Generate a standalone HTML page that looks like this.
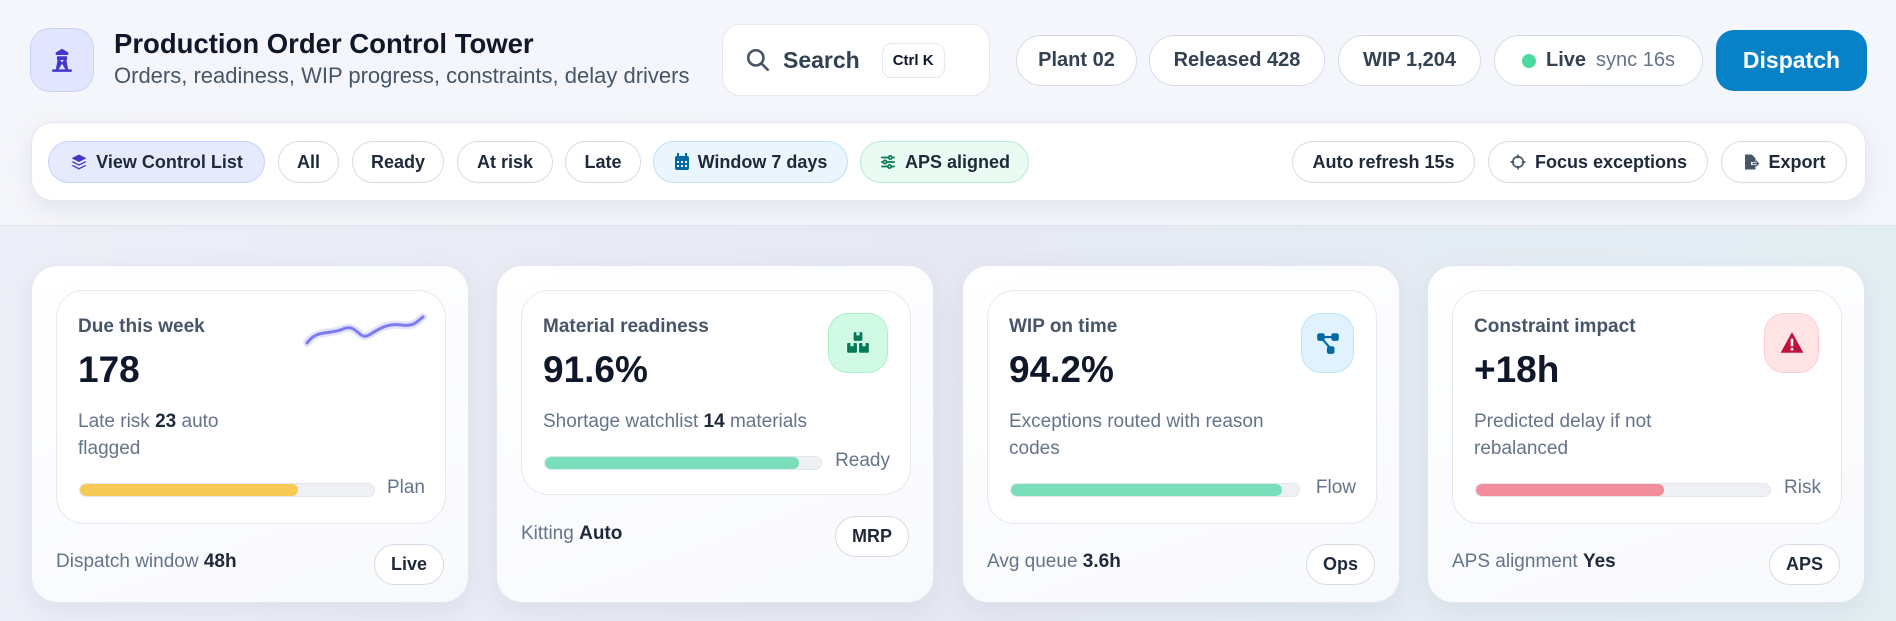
<!DOCTYPE html>
<html><head><meta charset="utf-8"><style>
*{box-sizing:border-box;margin:0;padding:0}
body{width:1896px;height:621px;overflow:hidden;font-family:"Liberation Sans",Arial,sans-serif;background:linear-gradient(90deg,#eceff7,#e6e9f3 50%,#e3eef3);color:#0f172a;position:relative}
.hdr{position:absolute;left:0;top:0;width:1896px;height:226px;background:linear-gradient(90deg,#f5f6fb,#f3f6fb);border-bottom:1px solid #e2e6ef}
.abs{position:absolute}
.logo{left:30px;top:28px;width:64px;height:64px;border-radius:20px;background:#e1e6fe;border:1px solid #c9d2fb;display:flex;align-items:center;justify-content:center}
.title{left:114px;top:28px;font-size:27.5px;font-weight:700;color:#0f172a}
.sub{left:114px;top:63px;font-size:22px;color:#475569}
.search{left:722px;top:24px;width:268px;height:72px;border:1px solid #e2e8f0;border-radius:18px;background:#fff;display:flex;align-items:center;padding-left:22px;font-size:23px;color:#334155;font-weight:600}
.kbd{margin-left:22px;border:1px solid #e2e8f0;border-radius:10px;padding:8px 10px;font-size:15px;font-weight:700;color:#0f172a}
.pill{top:35px;height:51px;border:1px solid #d6dce6;border-radius:26px;background:#fff;display:flex;align-items:center;justify-content:center;font-size:20px;font-weight:600;color:#334155}
.disp{left:1716px;top:30px;width:151px;height:61px;border-radius:18px;background:#0782c8;color:#fff;font-size:23px;font-weight:700;display:flex;align-items:center;justify-content:center}
.bar{left:31px;top:122px;width:1835px;height:79px;background:#fff;border:1px solid #e5e8f0;border-radius:22px;box-shadow:0 8px 24px rgba(100,110,140,.12)}
.chip{top:141px;height:42px;border:1px solid #d6dce6;border-radius:21px;background:#fff;display:flex;align-items:center;justify-content:center;font-size:18px;font-weight:700;color:#1e293b;gap:8px}
.card{top:265px;width:438px;height:338px;background:linear-gradient(160deg,#fff,#f8f9fc);border:1px solid #e2e6ef;border-radius:26px;box-shadow:0 8px 24px rgba(100,110,140,.1)}
.in{position:absolute;left:24px;top:24px;width:390px;border:1px solid #e4e8f0;border-radius:28px;background:#fff}
.lab{position:absolute;left:21px;top:25px;font-size:19px;font-weight:700;color:#475569}
.val{position:absolute;left:21px;top:58px;font-size:37px;font-weight:700;color:#0f172a}
.desc{position:absolute;left:21px;top:117px;font-size:19px;line-height:27px;color:#64748b;width:300px}
.desc b{color:#1e293b}
.trk{position:absolute;left:22px;height:14px;border-radius:7px;background:#eef0f4;border:1px solid #e2e6ee;overflow:hidden}
.trk i{display:block;height:100%;border-radius:7px}
.tl{position:absolute;right:20px;font-size:19px;color:#64748b}
.foot{position:absolute;left:24px;font-size:19px;color:#64748b}
.foot b{color:#1e293b}
.fp{position:absolute;right:24px;height:41px;padding:0 16px;border:1px solid #d6dce6;border-radius:21px;display:flex;align-items:center;font-size:18px;font-weight:700;color:#1e293b;background:#fff}
.ic{position:absolute;right:22px;top:22px;width:56px;height:60px;border-radius:20px;display:flex;align-items:center;justify-content:center}
</style></head><body>
<div class="hdr"></div>
<div class="abs logo"><svg width="30" height="30" viewBox="0 0 24 24" fill="#4338ca"><path d="M7 6 L12 3 L17 6 V8 H7Z"/><rect x="8" y="9" width="8" height="3"/><path d="M8.5 12 L7 20 H9 L12 15 L15 20 H17 L15.5 12 H13.5 L12 14 L10.5 12Z"/><rect x="4" y="19.5" width="16" height="2" rx="1"/></svg></div>
<div class="abs title">Production Order Control Tower</div>
<div class="abs sub">Orders, readiness, WIP progress, constraints, delay drivers</div>
<div class="abs search"><svg width="26" height="26" viewBox="0 0 24 24" fill="none" stroke="#475569" stroke-width="2.4" stroke-linecap="round"><circle cx="10" cy="10" r="7"/><path d="M15 15l6 6"/></svg><span style="margin-left:12px">Search</span><span class="kbd">Ctrl K</span></div>
<div class="abs pill" style="left:1016px;width:121px">Plant 02</div>
<div class="abs pill" style="left:1149px;width:176px">Released 428</div>
<div class="abs pill" style="left:1338px;width:143px">WIP 1,204</div>
<div class="abs pill" style="left:1494px;width:209px;gap:10px"><span style="width:14px;height:14px;border-radius:50%;background:#4ad9a0"></span>Live <span style="font-weight:400;color:#64748b">sync 16s</span></div>
<div class="abs disp">Dispatch</div>
<div class="abs bar"></div>
<div class="abs chip" style="left:48px;width:217px;background:#e6eafd;border-color:#c8d0fb"><svg width="18" height="18" viewBox="0 0 24 24" fill="#4338ca"><path d="M12 2L2 7l10 5 10-5z"/><path d="M2 12l10 5 10-5-2-1-8 4-8-4z"/><path d="M2 17l10 5 10-5-2-1-8 4-8-4z"/></svg>View Control List</div>
<div class="abs chip" style="left:278px;width:61px">All</div>
<div class="abs chip" style="left:352px;width:92px">Ready</div>
<div class="abs chip" style="left:457px;width:96px">At risk</div>
<div class="abs chip" style="left:565px;width:76px">Late</div>
<div class="abs chip" style="left:653px;width:195px;background:#eaf5fe;border-color:#bfe0f7"><svg width="16" height="18" viewBox="0 0 16 18" fill="#0369a1"><rect x="1" y="3" width="14" height="14" rx="2"/><rect x="3" y="0" width="2" height="4"/><rect x="11" y="0" width="2" height="4"/><g fill="#eaf5fe"><rect x="3" y="8" width="2" height="2"/><rect x="7" y="8" width="2" height="2"/><rect x="11" y="8" width="2" height="2"/><rect x="3" y="12" width="2" height="2"/><rect x="7" y="12" width="2" height="2"/><rect x="11" y="12" width="2" height="2"/></g></svg>Window 7 days</div>
<div class="abs chip" style="left:860px;width:169px;background:#e9fbf2;border-color:#b6ecd2"><svg width="18" height="18" viewBox="0 0 24 24" fill="none" stroke="#047857" stroke-width="2.2"><path d="M3 6h18M3 12h18M3 18h18"/><circle cx="15" cy="6" r="2.2" fill="#e9fbf2"/><circle cx="8" cy="12" r="2.2" fill="#e9fbf2"/><circle cx="14" cy="18" r="2.2" fill="#e9fbf2"/></svg>APS aligned</div>
<div class="abs chip" style="left:1292px;width:183px;font-weight:600">Auto refresh 15s</div>
<div class="abs chip" style="left:1488px;width:220px;font-weight:600"><svg width="18" height="18" viewBox="0 0 24 24" fill="none" stroke="#475569" stroke-width="2.2"><circle cx="12" cy="12" r="7"/><path d="M12 2v5M12 17v5M2 12h5M17 12h5"/></svg>Focus exceptions</div>
<div class="abs chip" style="left:1721px;width:126px;font-weight:600"><svg width="18" height="18" viewBox="0 0 24 24" fill="#475569"><path d="M4 2h9l5 5v5h-6v4h6v6H4z"/><path d="M14 13h6l-2-2 1.2-1.2L23 14l-3.8 4.2L18 17l2-2h-6z"/></svg>Export</div>

<div class="abs card" style="left:31px">
 <div class="in" style="height:234px">
  <div class="lab">Due this week</div>
  <svg style="position:absolute;right:18px;top:20px" width="124" height="40" viewBox="0 0 124 40"><path d="M4 32 C14 18,26 24,40 18 S56 30,66 24 S84 12,98 14 S114 10,120 6" fill="none" stroke="#c7c8fb" stroke-width="8" stroke-linecap="round" opacity=".5"/><path d="M4 32 C14 18,26 24,40 18 S56 30,66 24 S84 12,98 14 S114 10,120 6" fill="none" stroke="#7c7cf2" stroke-width="3" stroke-linecap="round"/></svg>
  <div class="val">178</div>
  <div class="desc" style="width:200px">Late risk <b>23</b> auto flagged</div>
  <div class="trk" style="top:192px;width:296px"><i style="width:74%;background:#f7c955"></i></div>
  <div class="tl" style="top:186px">Plan</div>
 </div>
 <div class="foot" style="top:285px">Dispatch window <b>48h</b></div>
 <div class="fp" style="top:278px">Live</div>
</div>

<div class="abs card" style="left:496px">
 <div class="in" style="height:205px">
  <div class="lab">Material readiness</div>
  <div class="ic" style="background:#d1fae5;border:1px solid #a7f0cc;width:60px"><svg width="26" height="26" viewBox="0 0 24 24" fill="#047857"><rect x="8" y="2" width="8" height="8" rx="1"/><rect x="2" y="12" width="9" height="9" rx="1"/><rect x="13" y="12" width="9" height="9" rx="1"/><g fill="#d1fae5"><rect x="10.5" y="2" width="3" height="3"/><rect x="5" y="12" width="3" height="3"/><rect x="16" y="12" width="3" height="3"/></g></svg></div>
  <div class="val">91.6%</div>
  <div class="desc" style="width:330px">Shortage watchlist <b>14</b> materials</div>
  <div class="trk" style="top:165px;width:278px"><i style="width:92%;background:#79dfbb"></i></div>
  <div class="tl" style="top:159px">Ready</div>
 </div>
 <div class="foot" style="top:257px">Kitting <b>Auto</b></div>
 <div class="fp" style="top:250px">MRP</div>
</div>

<div class="abs card" style="left:962px">
 <div class="in" style="height:234px">
  <div class="lab">WIP on time</div>
  <div class="ic" style="background:#e0f2fe;border:1px solid #bae6fd;width:53px"><svg width="26" height="26" viewBox="0 0 24 24" fill="#0369a1"><rect x="2" y="3" width="7" height="7" rx="2"/><rect x="15" y="3" width="7" height="7" rx="2"/><rect x="11" y="15" width="7" height="7" rx="2"/><path d="M8 5.5h8v2H8z"/><path d="M6 9l7 8 1.5-1.3-7-8z"/></svg></div>
  <div class="val">94.2%</div>
  <div class="desc" style="width:290px">Exceptions routed with reason codes</div>
  <div class="trk" style="top:192px;width:290px"><i style="width:94%;background:#79dfbb"></i></div>
  <div class="tl" style="top:186px">Flow</div>
 </div>
 <div class="foot" style="top:285px">Avg queue <b>3.6h</b></div>
 <div class="fp" style="top:278px">Ops</div>
</div>

<div class="abs card" style="left:1427px">
 <div class="in" style="height:234px">
  <div class="lab">Constraint impact</div>
  <div class="ic" style="background:#ffe4e6;border:1px solid #fecdd3;width:55px"><svg width="26" height="26" viewBox="0 0 24 24"><path d="M12 2L1.5 21h21z" fill="#be123c"/><rect x="10.8" y="8" width="2.4" height="7" fill="#fff"/><rect x="10.8" y="16.5" width="2.4" height="2.4" fill="#fff"/></svg></div>
  <div class="val">+18h</div>
  <div class="desc" style="width:220px">Predicted delay if not rebalanced</div>
  <div class="trk" style="top:192px;width:296px"><i style="width:64%;background:#f28d9c"></i></div>
  <div class="tl" style="top:186px">Risk</div>
 </div>
 <div class="foot" style="top:285px">APS alignment <b>Yes</b></div>
 <div class="fp" style="top:278px">APS</div>
</div>
</body></html>
